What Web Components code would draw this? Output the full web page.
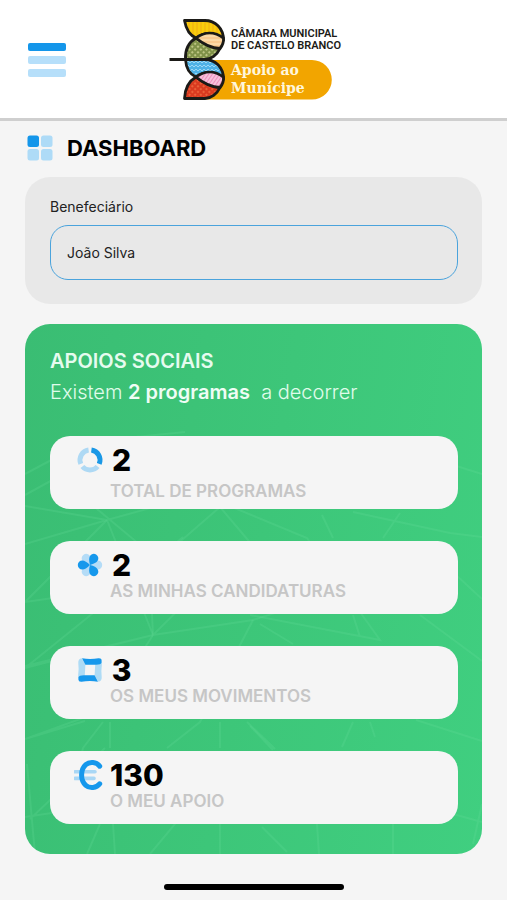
<!DOCTYPE html>
<html lang="pt">
<head>
<meta charset="utf-8">
<meta name="viewport" content="width=device-width, initial-scale=1">
<title>Apoio ao Munícipe</title>
<style>
  body {
    margin: 0;
    background-color: #f5f5f5;
    color: #000;
    font-family: Inter, "Liberation Sans", sans-serif;
  }
  /* slotted into support-panel */
  .summary strong {
    font-weight: 600;
    color: #effdf5;
  }
</style>
</head>
<body>
<dashboard-page>
  <app-header slot="header"></app-header>
  <page-title>DASHBOARD</page-title>
  <beneficiary-field label="Benefeciário" value="João Silva"></beneficiary-field>
  <support-panel heading="APOIOS SOCIAIS">
    <span slot="summary" class="summary">Existem <strong>2 programas</strong>&nbsp; a decorrer</span>
    <stat-card icon="ring" value="2" roomy>TOTAL DE PROGRAMAS</stat-card>
    <stat-card icon="flower" value="2">AS MINHAS CANDIDATURAS</stat-card>
    <stat-card icon="frame" value="3">OS MEUS MOVIMENTOS</stat-card>
    <stat-card icon="euro" value="130">O MEU APOIO</stat-card>
  </support-panel>
</dashboard-page>

<script>
const ICONS = {
  ring: `
    <svg viewBox="0 0 32 32" fill="none" stroke-width="5">
      <path d="M17.4 6.1A10 10 0 0 1 25.2 19.9" stroke="#1a98e6"/>
      <path d="M14.6 6.1A10 10 0 0 0 6.8 19.9" stroke="#aed9f4"/>
      <path d="M8.4 22.5A10 10 0 0 0 23.6 22.5" stroke="#aed9f4"/>
    </svg>`,
  flower: `
    <svg viewBox="0 0 32 32">
      <defs>
        <path id="petal" d="M16 16C13 13 11.5 10.6 11.5 8.3A4.500 4.500 0 0 1 20.500 8.3C20.500 10.6 19 13 16 16Z"/>
      </defs>
      <g fill="#b4dcf7">
        <use href="#petal" transform="rotate(-30 16 16)"/>
        <use href="#petal" transform="rotate(90 16 16)"/>
        <use href="#petal" transform="rotate(210 16 16)"/>
      </g>
      <g fill="#1698ec">
        <use href="#petal" transform="rotate(30 16 16)"/>
        <use href="#petal" transform="rotate(150 16 16)"/>
        <use href="#petal" transform="rotate(270 16 16)"/>
      </g>
    </svg>`,
  frame: `
    <svg viewBox="0 0 32 32">
      <path fill="#aedbf5" d="M7.6 4.2L11.4 10.4L10.8 21.6L4.8 24Q3.8 23 4.2 20.500Q5 15 4.3 9Q4 5 7.6 4.2Z"/>
      <path fill="#aedbf5" d="M24.4 27.8L20.6 21.6L21.2 10.4L27.2 8Q28.2 9 27.8 11.5Q27 17 27.7 23Q28 27 24.4 27.8Z"/>
      <path fill="#1698ec" d="M8 4.2Q16 5.8 24.500 4.2Q27.6 4 27.6 6.4V8.6Q27 10.8 22 10.8H11.4Z"/>
      <path fill="#1698ec" d="M24 27.8Q16 26.2 7.5 27.8Q4.4 28 4.4 25.6V23.4Q5 21.2 10 21.2H20.6Z"/>
    </svg>`,
  euro: `
    <svg viewBox="0 0 32 32" fill="none" stroke-linecap="round">
      <path d="M1 12.8H21M1 19.4H20" stroke="#a9d7f5" stroke-width="3.6"/>
      <path d="M25.7 7.2C22.6 2.9 15.6 2.3 11.8 5.7C6.2 10.7 6.2 21.3 11.8 26.3C15.6 29.7 22.6 29.1 25.7 24.8" stroke="#1698ec" stroke-width="5"/>
    </svg>`
};

class DashboardPage extends HTMLElement {
  constructor() {
    super();
    this.attachShadow({ mode: "open" }).innerHTML = `
      <style>
        :host {
          display: flex;
          flex-direction: column;
          min-height: 100vh;
        }
        main {
          flex: 1;
          padding: 12px 25px 0;
        }
        .home-indicator {
          width: 180px;
          height: 6px;
          margin: 30px auto 10px;
          border-radius: 3px;
          background-color: #000;
        }
      </style>
      <slot name="header"></slot>
      <main><slot></slot></main>
      <div class="home-indicator"></div>
    `;
  }
}

class AppHeader extends HTMLElement {
  constructor() {
    super();
    this.attachShadow({ mode: "open" }).innerHTML = `
      <style>
        :host {
          display: block;
          background-color: #fff;
          border-bottom: 3px solid #cfcfcf;
        }
        header {
          display: grid;
          grid-template-columns: 1fr auto 1fr;
          align-items: center;
          height: 116px;
          padding: 2px 25px 0;
        }
        .menu {
          display: flex;
          flex-direction: column;
          justify-self: start;
          gap: 5px;
          padding: 3px;
          border: 0;
          background: none;
          cursor: pointer;
        }
        .menu span {
          width: 38px;
          height: 8px;
          border-radius: 2px;
          background-color: #b6dffa;
        }
        .menu span:first-child {
          background-color: #1496ea;
        }
        .logo {
          display: block;
          width: 172px;
          height: 84px;
          overflow: visible;
        }
      </style>
      <header>
        <button class="menu" type="button" aria-label="Menu"><span></span><span></span><span></span></button>
        <svg class="logo" viewBox="168 18 172 84" role="img" aria-label="Câmara Municipal de Castelo Branco">
          <defs>
            <pattern id="yellow" width="4" height="4" patternUnits="userSpaceOnUse">
              <rect width="4" height="4" fill="#f9cc0c"/>
              <path d="M1 0V4" stroke="#f2ae12" stroke-width="1"/>
            </pattern>
            <pattern id="green" width="4" height="4" patternUnits="userSpaceOnUse" patternTransform="rotate(45)">
              <rect width="4" height="4" fill="#7f9148"/>
              <rect width="2" height="2" fill="#bcc482"/>
            </pattern>
            <pattern id="blue" width="4" height="4" patternUnits="userSpaceOnUse">
              <rect width="4" height="4" fill="#4fb2e6"/>
              <path d="M0 1L2 3L4 1" fill="none" stroke="#9bd7f5" stroke-width="1"/>
            </pattern>
            <pattern id="pink" width="3" height="3" patternUnits="userSpaceOnUse" patternTransform="rotate(35)">
              <rect width="3" height="3" fill="#f7c2dc"/>
              <rect width="1" height="3" fill="#ed8fbd"/>
            </pattern>
            <pattern id="peach" width="4" height="4" patternUnits="userSpaceOnUse">
              <rect width="4" height="4" fill="#fcd9a6"/>
              <path d="M0 2H4" stroke="#f6bc7a" stroke-width="1"/>
            </pattern>
            <pattern id="red" width="4" height="4" patternUnits="userSpaceOnUse" patternTransform="rotate(45)">
              <rect width="4" height="4" fill="#d93a20"/>
              <rect width="2" height="2" fill="#e96038"/>
            </pattern>
          </defs>
          <path fill="#f2a500" d="M205 60H312A19.800 19.800 0 0 1 312 99.600H186Z"/>
          <g stroke="#1b1a17" stroke-width="2.800" stroke-linejoin="round">
            <path fill="url(#yellow)" d="M184.500 20.500H205C215 20.500 223.500 28 223.500 40C214 31 204 32 196 38C189 35 186 29 184.500 20.500Z"/>
            <path fill="url(#green)" d="M196 38C202 43 210 48 220 48.500C217 55 211 59.500 205 59.500H185.500C185 50 189 42 196 38Z"/>
            <path fill="url(#peach)" d="M196 38C204 32 214 31 223.500 38C223.800 42 222.500 45.500 220 48.500C210 48 202 43 196 38Z"/>
            <path fill="url(#blue)" d="M185.500 59.500H205C215 59.500 223.500 67 223.500 79C214 70 204 71 196 77C189 74 186 68 185.500 59.500Z"/>
            <path fill="url(#red)" d="M196 77C202 82 210 87 220 87.500C217 94 211 98.500 205 98.500H184.500C185 89 189 81 196 77Z"/>
            <path fill="url(#pink)" d="M196 77C204 71 214 70 223.500 77C223.800 81 222.500 84.500 220 87.500C210 87 202 82 196 77Z"/>
            <path d="M169.500 59.500H205" fill="none"/>
          </g>
          <g font-family="Roboto, 'Liberation Sans', sans-serif" font-size="11" font-weight="600" fill="#1b1a17">
            <text x="231" y="37">CÂMARA MUNICIPAL</text>
            <text x="231" y="49">DE CASTELO BRANCO</text>
          </g>
          <g font-family="'DejaVu Serif', serif" font-size="14" font-weight="700" fill="#fff6dc">
            <text x="231" y="75">Apoio ao</text>
            <text x="231" y="93">Munícipe</text>
          </g>
        </svg>
      </header>
    `;
  }
}

class PageTitle extends HTMLElement {
  constructor() {
    super();
    this.attachShadow({ mode: "open" }).innerHTML = `
      <style>
        :host {
          display: flex;
          align-items: center;
          gap: 14px;
          padding: 0 2px;
        }
        svg {
          width: 26px;
          height: 26px;
        }
        h1 {
          margin: 0;
          font-size: 22px;
          line-height: 30px;
          font-weight: 700;
        }
      </style>
      <svg viewBox="0 0 26 26" fill="#aedbf7" aria-hidden="true">
        <rect x="0.500" y="0.500" width="11.500" height="11.500" rx="2.500" fill="#1496ea"/>
        <rect x="14" y="0.500" width="11.500" height="11.500" rx="2.500"/>
        <rect x="0.500" y="14" width="11.500" height="11.500" rx="2.500"/>
        <rect x="14" y="14" width="11.500" height="11.500" rx="2.500"/>
      </svg>
      <h1><slot></slot></h1>
    `;
  }
}

class BeneficiaryField extends HTMLElement {
  connectedCallback() {
    if (this.shadowRoot) return;
    this.attachShadow({ mode: "open" }).innerHTML = `
      <style>
        :host {
          display: block;
          margin-top: 14px;
          padding: 20px 24px 24px 25px;
          border-radius: 25px;
          background-color: #e8e8e8;
          color: #222;
        }
        label {
          display: block;
          margin-bottom: 8px;
          font-size: 14px;
          line-height: 20px;
        }
        input {
          display: block;
          box-sizing: border-box;
          width: 100%;
          height: 55px;
          padding: 0 16px;
          border: 1px solid #4aa3dc;
          border-radius: 18px;
          background: none;
          color: inherit;
          font: inherit;
          font-size: 14px;
        }
      </style>
      <label for="beneficiary">${this.getAttribute("label")}</label>
      <input id="beneficiary" type="text" value="${this.getAttribute("value")}">
    `;
  }
}

class SupportPanel extends HTMLElement {
  connectedCallback() {
    if (this.shadowRoot) return;
    this.attachShadow({ mode: "open" }).innerHTML = `
      <style>
        :host {
          display: block;
          position: relative;
          overflow: hidden;
          margin-top: 20px;
          padding: 24px 24px 30px 25px;
          border-radius: 25px;
          background-image: linear-gradient(100deg, #3abd73, #3dc679 50%, #40cf80);
        }
        .mesh {
          position: absolute;
          inset: 0;
          width: 100%;
          height: 100%;
        }
        .content {
          position: relative;
        }
        h2, p {
          margin: 0;
          font-size: 20px;
        }
        h2 {
          line-height: 26px;
          font-weight: 600;
          color: #e6fbef;
        }
        p {
          margin-top: 3px;
          line-height: 30px;
          font-weight: 300;
          color: #e0fceb;
        }
        .cards {
          display: flex;
          flex-direction: column;
          gap: 32px;
          margin-top: 29px;
        }
      </style>
      <svg class="mesh" viewBox="0 0 457 530" preserveAspectRatio="xMidYMid slice" fill="none" stroke="#6fe0a0" stroke-opacity="0.2" stroke-width="2" aria-hidden="true">
        <path d="M0 150L60 118L160 108M0 171L60 138L150 130M0 182L82 196L220 158M0 220L82 196M66 180L150 250M82 196L128 311M150 222L195 183L228 222"/>
        <path d="M0 278L82 196M0 278L70 268M0 344L62 294L158 213M0 342L128 311L228 296L340 260M127 290L128 311L200 240M128 311L88 321L0 344"/>
        <path d="M0 415L80 386L128 311M0 415L60 397M78 398L58 424L45 480M85 398V424M142 424L175 398L228 296M195 398V424M222 398L250 425"/>
        <path d="M2 440L10 530M0 493L40 487M5 495L80 424M75 500L62 530M88 500L90 530M125 530L200 440M195 440V530"/>
        <path d="M190 176L282 214L355 316L225 291M297 191L308 214M328 188L425 209L457 213M375 189L358 214M235 300L268 320M328 291L335 313M395 291L457 337"/>
        <path d="M225 402L248 426M328 398L317 423M345 398L350 413M391 396L457 417M237 503L262 528M292 500L294 530M368 500V530M457 480L448 520M425 140L457 150M430 250L457 275M428 490L457 498"/>
      </svg>
      <div class="content">
        <h2>${this.getAttribute("heading")}</h2>
        <p><slot name="summary"></slot></p>
        <div class="cards"><slot></slot></div>
      </div>
    `;
  }
}

class StatCard extends HTMLElement {
  connectedCallback() {
    if (this.shadowRoot) return;
    this.attachShadow({ mode: "open" }).innerHTML = `
      <style>
        :host {
          display: grid;
          grid-template-columns: 32px 1fr;
          column-gap: 4px;
          align-content: start;
          box-sizing: border-box;
          min-height: 73px;
          padding: 8px 24px;
          border-radius: 20px;
          background-color: #f5f5f5;
        }
        :host([roomy]) {
          row-gap: 5px;
          padding-bottom: 6px;
        }
        svg {
          width: 32px;
          height: 32px;
        }
        .value {
          justify-self: start;
          min-width: 23px;
          font-size: 30px;
          line-height: 32px;
          font-weight: 800;
          text-align: center;
        }
        .label {
          grid-column: 2;
          font-size: 17px;
          line-height: 20px;
          font-weight: 600;
          color: #c6c6c6;
        }
      </style>
      ${ICONS[this.getAttribute("icon")]}
      <div class="value">${this.getAttribute("value")}</div>
      <div class="label"><slot></slot></div>
    `;
  }
}

customElements.define("dashboard-page", DashboardPage);
customElements.define("app-header", AppHeader);
customElements.define("page-title", PageTitle);
customElements.define("beneficiary-field", BeneficiaryField);
customElements.define("support-panel", SupportPanel);
customElements.define("stat-card", StatCard);
</script>
</body>
</html>
